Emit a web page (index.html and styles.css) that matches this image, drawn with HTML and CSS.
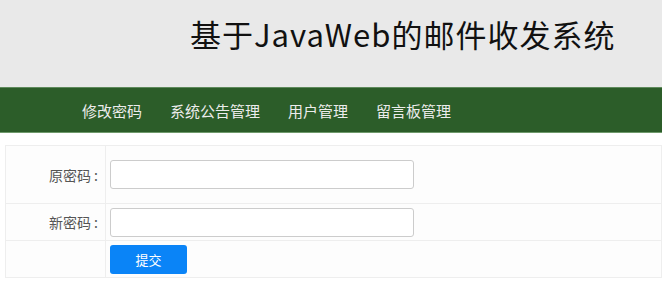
FILE: index.html
```html
<!DOCTYPE html>
<html lang="zh-CN">
<head>
    <meta charset="UTF-8">
    <meta name="viewport" content="width=device-width, initial-scale=1.0">
    <title>修改密码</title>
    <link rel="stylesheet" href="styles.css">
</head>
<body>
    <div class="header">
        <h1 class="title">基于JavaWeb的邮件收发系统</h1>
    </div>
    <div class="nav">
        <a href="#">修改密码</a>
        <a href="#">系统公告管理</a>
        <a href="#">用户管理</a>
        <a href="#">留言板管理</a>
    </div>

    <div class="main">
        <table class="form-table">
            <tr class="row-first">
                <td class="label">原密码 :</td>
                <td><input type="password" class="text-input"></td>
            </tr>
            <tr>
                <td class="label">新密码 :</td>
                <td><input type="password" class="text-input"></td>
            </tr>
            <tr>
                <td></td>
                <td><button class="btn-submit">提交</button></td>
            </tr>
        </table>
    </div>
</body>
</html>
```

FILE: styles.css
```css
body {
    margin: 0;
    font-family: "Noto Sans CJK SC", "Liberation Sans", sans-serif;
    background: #fff;
    overflow: hidden;
}
.header {
    height: 87px;
    background: #e9e9e9;
    padding-left: 190px;
    box-sizing: border-box;
}
.title {
    margin: 0;
    padding-top: 13px;
    font-size: 31px;
    font-weight: normal;
    letter-spacing: 1px;
    line-height: 42px;
    color: #111;
}
.nav {
    height: 44px;
    background: #2c5d29;
    border-top: 1px solid #5f8a5c;
    border-bottom: 1px solid #6f9a6c;
    padding-left: 82px;
    display: flex;
    align-items: center;
    gap: 28px;
}
.nav a {
    color: #ececec;
    text-decoration: none;
    font-size: 15px;
}
.main {
    padding: 12px 0 0 5px;
}
.form-table {
    width: 100%;
    border-collapse: collapse;
    border: 1px solid #eee;
    border-right: none;
    background: #fdfdfd;
}
.form-table td {
    border: 1px solid #eee;
    padding: 0 0 0 4px;
    height: 36px;
}
.form-table .row-first td {
    height: 57px;
}
.form-table td.label {
    width: 100px;
    box-sizing: border-box;
    text-align: right;
    padding-right: 7px;
    font-size: 14px;
    color: #555;
}
.text-input {
    display: block;
    width: 304px;
    height: 29px;
    box-sizing: border-box;
    border: 1px solid #ccc;
    border-radius: 3px;
    background: #fff;
}
.btn-submit {
    display: block;
    width: 77px;
    height: 29px;
    border: none;
    border-radius: 3px;
    background: #0a84f7;
    color: #fff;
    font-family: inherit;
    font-size: 13px;
}
```
